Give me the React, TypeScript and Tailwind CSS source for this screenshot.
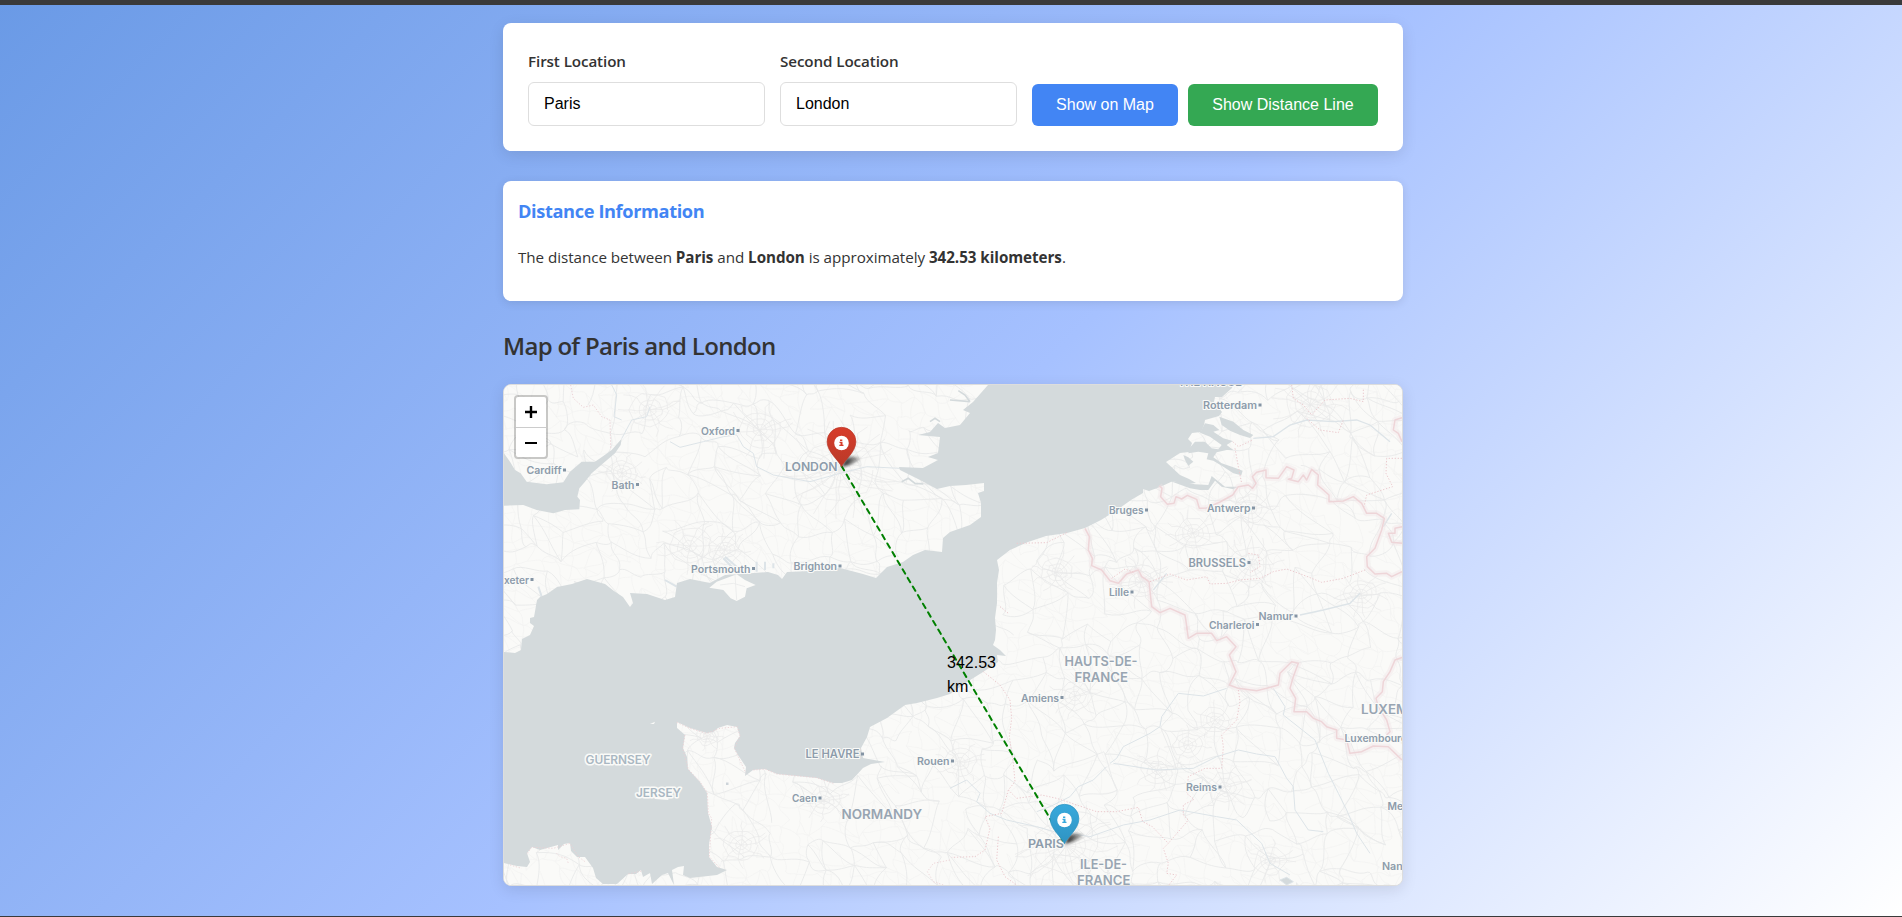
import React from "react";

const SEA =
  "M988 385L1233 385 1232 388 1222 397 1215 397 1214 402 1222 412 1219 416 1205 420 1204 425 1201 432 1192 433 1188 439 1192 443 1189 452 1180 453 1166 462 1180 475 1189 479 1196 483 1184 484 1173 481 1160 487 1149 491 1143 489 1143 493 1131 500 1117 510 1101 520 1085 528 1067 533 1046 536 1028 542 1010 550 997 560 999 570 997 583 997 603 995 618 996 630 995 640 993 645 1000 650 1006 656 997 655 998 662 983 672 967 682 950 694 937 698 917 703 905 705 887 718 870 727 867 737 861 748 863 758 885 762 871 764 863 768 852 780 842 783 833 783 817 778 797 776 777 774 765 769 753 770 745 776 746 767 738 755 734 748 735 743 740 736 737 727 727 725 718 728 713 732 707 733 690 728 677 722 677 728 685 735 683 748 687 757 688 769 700 782 707 793 708 813 712 827 709 844 709 857 717 867 727 870 717 875 690 878 683 875 684 866 678 867 672 870 674 885 668 873 662 875 652 884 650 873 643 877 641 870 636 874 628 874 617 884 603 884 596 878 593 868 585 857 577 857 571 851 570 843 564 844 558 850 558 845 540 850 532 847 527 853 530 862 527 867 517 866 504 863 504 652 515 653 521 650 522 639 530 635 534 626 530 623 530 618 534 617 537 600 540 597 547 594 557 587 572 584 587 579 605 584 614 591 623 597 630 607 633 603 630 593 647 594 665 600 675 597 677 583 690 579 710 583 725 575 740 574 768 572 778 575 782 579 787 572 810 571 840 568 863 574 876 578 887 567 903 562 913 555 925 550 942 552 943 538 950 532 970 525 981 517 981 503 978 493 984 491 984 483 966 485 950 486 937 489 920 480 900 470 899 467 923 468 938 460 928 457 938 453 940 437 918 435 930 432 938 423 945 428 960 425 970 413 963 410 973 402Z";

const BRISTOL =
  "M42 400L60 425 75 450 92 460 110 485 170 493 220 487 240 455 275 425 315 425 340 408 365 390 395 356 392 375 375 400 345 425 305 460 285 485 268 505 262 530 270 540 268 568 225 570 190 580 140 570 100 555 42 557Z";

const ESTUARIES = [
  "M765 160L790 165 808 180 790 185 820 205 848 213 830 225 850 240 830 240 800 247 790 262 815 280 850 292 878 302 874 316 850 310 820 290 790 272 770 268 775 250 745 245 715 250 718 235 735 215 765 215 785 235 805 238 815 225 780 200 750 188Z",
  "M808 140L850 155 880 180 910 195 900 204 870 195 840 182 815 165Z",
  "M660 333L700 335 735 343 775 345 785 318 800 330 825 350 865 350 850 358 815 350 795 332 775 360 750 360 720 355Z",
  "M700 255L715 262 730 275 715 287 705 270Z",
];

const SOLID_BORDERS = [
  "M628 347L636 355 632 380 652 403 672 400 678 380 695 387 712 376 740 388 748 415 770 414 810 396 848 375 865 350 895 345 908 355 918 340 907 320 920 307 948 300 948 323 985 325 1010 290 1032 300 1025 325 1015 328 1045 335 1060 315 1070 330 1085 298 1105 315 1103 345 1137 375 1137 395 1180 393 1210 380 1235 400 1250 430 1280 430 1303 445 1295 480 1275 535 1250 560 1252 590 1275 612 1310 610 1325 620 1356 605",
  "M1356 143L1335 150 1330 180 1345 190 1356 215M1356 470L1335 475 1335 490 1315 490 1325 517 1356 520",
  "M405 475L418 500 415 540 427 565 425 587 455 600 480 632 505 640 530 612 565 600 575 620 597 635 605 710 630 728 660 715 705 735 712 780",
];
const LOWER_BORDERS = [
  "M710 20L715 55 740 40 785 40 800 62 830 50 858 80 838 105 858 155 838 195 865 205 920 212 950 205 985 195 990 160 1025 125 1045 130 1030 170 1020 205 1037 235 1032 275 1070 275 1090 295 1115 305 1130 320 1160 330 1160 355 1190 360 1200 400 1235 395 1270 378 1315 380 1356 420",
  "M1356 112L1335 120 1320 155 1300 185 1297 215 1278 235 1285 260 1310 300 1320 335 1310 345",
];
const DOTTED_UPPER =
  "M1025 45L1030 85 1060 105 1085 135 1125 90 1200 85 1240 95 1240 55M1070 145L1110 180 1165 188 1180 150M848 215L865 230 908 210M855 235L865 290 875 340M1356 265L1310 265 1308 310 1328 350 1250 375 1242 410M485 625L525 597 550 607M600 635L660 612 710 630 770 620 780 642 830 640 870 630 930 625 970 605 1010 597 1060 615 1115 637 1180 625 1250 598M895 550L925 555 930 590 900 608M150 710L175 730M200 520L290 518 350 488";
const DOTTED_LOWER =
  "M100 155L150 195 180 240 185 295 178 350 190 430 195 485 175 510 200 535 275 525 320 535 380 555 440 575 500 575 565 562 578 605 607 620 655 670 640 685 655 730 650 760 680 765 655 797M865 210L870 245 860 300 815 345 820 380 815 445 765 445 715 470 710 520 732 538 700 555 700 585 715 600 655 670M175 510L155 580 105 590 120 625 105 690 75 710 5 712M145 650L140 720 165 770 200 795";

const DOTTED_FRANCE =
  "M560 367L600 385 650 400 690 385 742 380 750 408 733 445 768 520M585 405L578 445 595 508 630 545 652 578 655 640 665 655 658 770 690 805M790 510L825 507 860 522 980 533 1030 550M112 760L125 742 190 745 240 730 265 770 285 785M60 795L95 805M415 822L460 812M1380 780L1330 790 1312 815 1330 845 1360 855M200 760L210 770 230 775 235 790";

const RIVERS = [
  "M470 440L430 480 385 500 360 530 300 560 260 575M480 430L500 415 520 380 600 340 630 320 635 290 685 220 760 228 830 205",
  "M490 430L620 450 730 445 800 410 865 390 920 402 975 410 1010 475 1030 500 1035 570 1075 630 1120 635",
  "M970 205L1005 260 1000 285 1095 360 1135 460 1165 520 1190 570 1220 640 1260 700",
  "M360 640L420 650 520 615 600 600 690 570 800 590 860 600 935 670 960 730 1020 765",
  "M0 505L50 480 90 520 80 545 120 580 170 600 260 620 330 640",
];

function seeded(seed: number) {
  let s = seed;
  return () => {
    s = (s * 16807) % 2147483647;
    return s / 2147483647;
  };
}

type Pt = { x: number; y: number };

/* Builds a country-wide mesh of roads out of a jittered grid. */
function buildRoads(step: number, seed: number) {
  const rnd = seeded(seed);
  const rows = Math.ceil(540 / step) + 1;
  const cols = Math.ceil(940 / step) + 1;
  const grid: Pt[][] = [];
  for (let r = 0; r < rows; r++) {
    grid.push([]);
    for (let c = 0; c < cols; c++) {
      grid[r].push({
        x: 490 + c * step + (rnd() - 0.5) * step * 0.9,
        y: 370 + r * step + (rnd() - 0.5) * step * 0.9,
      });
    }
  }
  const link = (a: Pt, b: Pt) => {
    const j = () => (rnd() - 0.5) * step * 0.5;
    const p = (t: number) =>
      `${(a.x + (b.x - a.x) * t + j()).toFixed(1)} ${(a.y + (b.y - a.y) * t + j()).toFixed(1)}`;
    return `M${a.x.toFixed(1)} ${a.y.toFixed(1)}C${p(0.33)} ${p(0.66)} ${b.x.toFixed(1)} ${b.y.toFixed(1)}`;
  };
  let d = "";
  for (let r = 0; r < rows - 1; r++) {
    for (let c = 0; c < cols - 1; c++) {
      if (rnd() < 0.75) d += link(grid[r][c], grid[r][c + 1]);
      if (rnd() < 0.75) d += link(grid[r][c], grid[r + 1][c]);
      if (rnd() < 0.4) d += link(grid[r][c], grid[r + 1][c + 1]);
    }
  }
  return d;
}

/* Radial streets around a large town. */
function buildTown(cx: number, cy: number, radius: number, spokes: number, seed: number) {
  const rnd = seeded(seed);
  let d = "";
  for (let i = 0; i < spokes; i++) {
    let a = (i / spokes) * Math.PI * 2 + rnd() * 0.3;
    d += `M${cx} ${cy}`;
    for (let k = 1; k <= 5; k++) {
      a += (rnd() - 0.5) * 0.3;
      const q = (radius * k) / 5;
      d += `L${(cx + Math.cos(a) * q).toFixed(1)} ${(cy + Math.sin(a) * q * 0.85).toFixed(1)}`;
    }
  }
  for (const f of [0.2, 0.38, 0.6]) {
    for (let i = 0; i <= 16; i++) {
      const a = (i / 16) * Math.PI * 2;
      const q = radius * f * (0.88 + rnd() * 0.24);
      d += `${i ? "L" : "M"}${(cx + Math.cos(a) * q).toFixed(1)} ${(cy + Math.sin(a) * q * 0.85).toFixed(1)}`;
    }
  }
  return d;
}

const TOWNS: [number, number, number, number][] = [
  [840, 470, 58, 24],
  [1066, 846, 52, 22],
  [622, 473, 24, 9],
  [725, 550, 26, 9],
  [1193, 533, 28, 11],
  [1251, 565, 34, 13],
  [1141, 582, 32, 12],
  [1251, 509, 28, 10],
  [1057, 572, 26, 8],
  [1361, 594, 28, 10],
  [690, 546, 34, 8],
  [824, 800, 26, 9],
  [741, 845, 28, 8],
  [1075, 696, 28, 9],
  [1225, 787, 28, 9],
  [1157, 770, 26, 8],
  [1270, 861, 26, 8],
  [960, 762, 26, 10],
  [707, 736, 18, 7],
  [1215, 720, 24, 7],
  [1310, 405, 40, 12],
  [760, 430, 34, 9],
  [650, 410, 32, 9],
  [1188, 745, 24, 7],
];

const ROADS = buildRoads(26, 4241);
const LANES = buildRoads(14, 977);
const STREETS = TOWNS.map(([x, y, r, n], i) => buildTown(x, y, r, n, 91 + i * 37)).join("");

type Label = { t: string; x: number; y: number; w: number; size?: number; kind?: "city" | "region" | "isle"; dot?: boolean };

const LABELS: Label[] = [
  { t: "Oxford", x: 701, y: 434.5, w: 34, dot: true },
  { t: "Cardiff", x: 526.5, y: 474, w: 35, dot: true },
  { t: "Bath", x: 611.5, y: 488.5, w: 23, dot: true },
  { t: "xeter", x: 504, y: 583.5, w: 25, dot: true },
  { t: "Portsmouth", x: 691, y: 572.5, w: 59.5, dot: true },
  { t: "Brighton", x: 793.5, y: 570, w: 43.5, dot: true },
  { t: "LONDON", x: 785, y: 471, w: 52.5, size: 12 },
  { t: "Rotterdam", x: 1203, y: 409, w: 54, dot: true },
  { t: "Bruges", x: 1109, y: 514, w: 34.5, dot: true },
  { t: "Antwerp", x: 1207, y: 512, w: 43.5, dot: true },
  { t: "BRUSSELS", x: 1188.5, y: 566.5, w: 57.5, size: 11.5, dot: true },
  { t: "Lille", x: 1109, y: 596, w: 20, dot: true },
  { t: "Namur", x: 1258.5, y: 620, w: 34.5, dot: true },
  { t: "Charleroi", x: 1209, y: 628.5, w: 45.5, dot: true },
  { t: "Amiens", x: 1021, y: 701.5, w: 38, dot: true },
  { t: "Reims", x: 1186, y: 791, w: 31, dot: true },
  { t: "Rouen", x: 917, y: 765, w: 32.5, dot: true },
  { t: "Caen", x: 792, y: 802, w: 25, dot: true },
  { t: "LE HAVRE", x: 805.5, y: 758, w: 54, size: 11.5, dot: true },
  { t: "PARIS", x: 1028, y: 848, w: 36, size: 12 },
  { t: "Luxembourg", x: 1344.5, y: 742, w: 63 },
  { t: "Metz", x: 1387.5, y: 810, w: 25 },
  { t: "Nancy", x: 1382, y: 869.5, w: 33 },
  { t: "THE HAGUE", x: 1178, y: 386, w: 64, size: 11.5 },
  { t: "HAUTS-DE-", x: 1064.5, y: 665.5, w: 73, size: 13, kind: "region" },
  { t: "FRANCE", x: 1074.5, y: 681.5, w: 53.5, size: 13, kind: "region" },
  { t: "ILE-DE-", x: 1080, y: 868.5, w: 47, size: 13, kind: "region" },
  { t: "FRANCE", x: 1077, y: 884.5, w: 53.5, size: 13, kind: "region" },
  { t: "NORMANDY", x: 841.5, y: 819, w: 80.5, size: 13, kind: "region" },
  { t: "LUXEMBOURG", x: 1361, y: 714, w: 95, size: 12.5, kind: "region" },
  { t: "GUERNSEY", x: 585.5, y: 764, w: 65, size: 11.5, kind: "isle" },
  { t: "JERSEY", x: 636, y: 797, w: 45, size: 11.5, kind: "isle" },
];

const INK = { city: "#8d9cab", region: "#98a5b2", isle: "#a9b7c2" };

function MapLabel({ t, x, y, w, size = 10.2, kind = "city", dot }: Label) {
  return (
    <g>
      <text
        x={x}
        y={y}
        textLength={w}
        lengthAdjust="spacingAndGlyphs"
        fontSize={size}
        fill={INK[kind]}
        stroke="#fafaf8"
        strokeWidth={kind === "isle" ? 3 : 2.2}
        strokeLinejoin="round"
        paintOrder="stroke"
        className="font-['Inter',sans-serif] font-semibold"
      >
        {t}
      </text>
      {dot && <rect x={x + w + 1.5} y={y - 5.5} width="3" height="3" fill="#8494a4" />}
    </g>
  );
}

function Pin({ x, y, from, to, id }: { x: number; y: number; from: string; to: string; id: string }) {
  return (
    <g transform={`translate(${x} ${y})`}>
      <defs>
        <linearGradient id={id} x1="0" y1="0" x2="0" y2="1">
          <stop offset="0" stopColor={from} />
          <stop offset="1" stopColor={to} />
        </linearGradient>
      </defs>
      <path d="M0 0L5 -9Q11 -11 18 -9.5Q20 -8 14 -5Q7 -1 0 0Z" fill="url(#shade)" filter="url(#soft)" />
      <path
        d="M0 -0.3C-2 -6 -14.4 -15 -14.4 -25.3A14.4 14.4 0 0 1 14.4 -25.3C14.4 -15 2 -6 0 -0.3Z"
        fill={`url(#${id})`}
        stroke={to}
        strokeWidth="0.7"
      />
      <circle cx="0" cy="-24" r="7.3" fill="#fff" />
      <path d="M-1.5 -27.5H0.8V-26H-1.5ZM-2 -25.3H1V-22.2H2V-21H-2.2V-22.2H-1V-24.1H-2Z" fill={from} />
    </g>
  );
}

function ChannelMap() {
  return (
    <svg viewBox="504 385 898 500" className="block h-full w-full">
      <defs>
        <filter id="soft" x="-40%" y="-80%" width="180%" height="260%">
          <feGaussianBlur stdDeviation="1.4" />
        </filter>
        <linearGradient id="shade">
          <stop offset="0.2" stopColor="#000" stopOpacity="0.8" />
          <stop offset="1" stopColor="#000" stopOpacity="0.2" />
        </linearGradient>
      </defs>
      <rect x="504" y="385" width="898" height="500" fill="#fafaf8" />
      <path d={LANES} fill="none" stroke="#f4f4f3" strokeWidth="0.8" />
      <path d={ROADS} fill="none" stroke="#e9eaea" strokeWidth="0.9" />
      <path d={STREETS} fill="none" stroke="#e9eaea" strokeWidth="0.7" />
      <g transform="translate(950 620) scale(.33333)" fill="none" stroke="#dde4e8" strokeWidth="3">
        {RIVERS.map((d) => (
          <path key={d} d={d} />
        ))}
        <path d="M990 780L1010 772 1030 785 1010 795Z" fill="#d4dadc" />
      </g>
      <g transform="translate(490 320) scale(.33333)" fill="none" stroke="#dde4e8" strokeWidth="3">
        <path d="M395 356L425 300 470 290 480 260M365 195L380 225 372 290 395 300M540 365L570 382 640 365 700 350 740 345 760 380 790 400 800 440 850 465 960 485 1050 460 1130 440 1230 445" />
        <path d="M705 710L740 740 730 745 700 715M800 725V755M825 725V750M850 730V745M525 780L560 800M145 800L155 830" strokeWidth="6" />
        <path d="M242 195L250 235 280 262 310 255 335 290 360 300 362 385" stroke="#ecd3d7" strokeDasharray="4 5" />
      </g>

      <path d={SEA} fill="#d4dadc" />
      <g transform="translate(490 320) scale(.33333)">
        <path d={BRISTOL} fill="#d4dadc" />
        <path d="M658 803L680 785 740 763 765 780 797 795 770 805 765 830 740 843 722 835 700 810Z" fill="#fafaf8" />
        <path d="M690 795L730 790 765 800M735 765L740 840" fill="none" stroke="#e9eaea" strokeWidth="2.5" />
        <path d="M1320 305L1335 295 1350 305M1235 485L1255 475 1275 490 1300 492" fill="none" stroke="#d4dadc" strokeWidth="5" />
      </g>
      <g transform="translate(950 370) scale(.33333)" fill="#d4dadc">
        {ESTUARIES.map((d) => (
          <path key={d} d={d} />
        ))}
        <path d="M25 62L45 75 60 95M0 90L60 95M45 120L65 105" fill="none" stroke="#d4dadc" strokeWidth="5" />
        <path d="M910 205L970 200 1020 165 1070 150 1150 155 1220 150 1260 165 1320 215M1325 430L1300 470M610 660L650 610M1230 670L1200 700 1120 720 1050 735" fill="none" stroke="#dde4e8" strokeWidth="4" />
      </g>
      <g transform="translate(490 600) scale(.33333)" fill="#fafaf8">
        <path d="M480 372L495 365 492 372ZM400 462L385 478 400 485ZM490 590L535 590 535 600 495 597Z" />
        <path d={DOTTED_FRANCE} fill="none" stroke="#ecd0d4" strokeWidth="2.5" strokeDasharray="4 5" />
      </g>

      <g fill="none" strokeLinejoin="round">
        <g transform="translate(950 370) scale(.33333)">
          {SOLID_BORDERS.map((d) => (
            <g key={d}>
              <path d={d} stroke="#f0e4e5" strokeOpacity="0.4" strokeWidth="18" />
              <path d={d} stroke="#eed5d8" strokeWidth="4.5" />
            </g>
          ))}
          <path d={DOTTED_UPPER} stroke="#ebcace" strokeWidth="3" strokeDasharray="4 5" />
        </g>
        <g transform="translate(950 620) scale(.33333)">
          {LOWER_BORDERS.map((d) => (
            <g key={d}>
              <path d={d} stroke="#f0e4e5" strokeOpacity="0.4" strokeWidth="18" />
              <path d={d} stroke="#eed5d8" strokeWidth="4.5" />
            </g>
          ))}
          <path d={DOTTED_LOWER} stroke="#ebcace" strokeWidth="3" strokeDasharray="4 5" />
        </g>
      </g>

      {LABELS.map((l) => (
        <MapLabel key={`${l.t}-${l.x}`} {...l} />
      ))}
      <rect x="726" y="782.5" width="2.5" height="2.5" fill="#cdd4d9" />

      <path d="M841.5 466L1064.5 843" stroke="green" strokeWidth="2" strokeDasharray="5 5" strokeLinecap="round" fill="none" />
      <Pin id="pin-red" x={841.5} y={467} from="#d73c2a" to="#b93a29" />
      <Pin id="pin-blue" x={1064.5} y={844} from="#38a9dc" to="#2f93c2" />
    </svg>
  );
}

function Field({ label, value }: { label: string; value: string }) {
  return (
    <label className="flex w-[237px] flex-col">
      <span className="mb-[9px] text-[15.2px] leading-6 font-semibold tracking-[-0.1px] text-[#333]">{label}</span>
      <input
        defaultValue={value}
        className="h-11 w-full rounded-[6px] border border-[#dedede] bg-white px-[15px] font-['Liberation_Sans',sans-serif] text-base text-black outline-none"
      />
    </label>
  );
}

export default function App() {
  return (
    <div className="flex h-[917px] flex-col overflow-hidden border-t-[5px] border-b border-[#3a3a3a] bg-[linear-gradient(135deg,#6a9ae6_0%,#a6c1ff_50%,#ffffff_100%)] bg-origin-border pl-1 font-['Open_Sans','Noto_Sans',sans-serif] text-[#333]">
      <main className="mx-auto flex w-[900px] flex-col pt-[18px]">
        <section className="flex h-32 items-end rounded-lg bg-white px-[25px] pb-[25px] shadow-[0_4px_15px_rgba(0,0,0,0.1)]">
          <div className="flex gap-[15px]">
            <Field label="First Location" value="Paris" />
            <Field label="Second Location" value="London" />
          </div>
          <div className="ml-[15px] flex gap-[10px] font-['Liberation_Sans',sans-serif] text-base text-white">
            <button className="h-[42px] w-[146px] rounded-[6px] bg-[#4285f4]">Show on Map</button>
            <button className="h-[42px] w-[190px] rounded-[6px] bg-[#34a853]">Show Distance Line</button>
          </div>
        </section>

        <section className="mt-[30px] h-[120px] rounded-lg bg-white px-[15px] pt-[15px] shadow-[0_2px_10px_rgba(0,0,0,0.1)]">
          <h3 className="text-[18.2px] leading-[31px] font-bold tracking-[-0.37px] text-[#4285f4]">Distance Information</h3>
          <p className="mt-[18px] text-[15.2px] leading-6 tracking-[-0.045px]">
            The distance between <strong>Paris</strong> and <strong>London</strong> is approximately{" "}
            <strong>342.53 kilometers</strong>.
          </p>
        </section>

        <h2 className="mt-[25px] text-[24px] leading-10 font-semibold tracking-[-0.7px]">Map of Paris and London</h2>

        <section className="relative mt-[18px] h-[502px] overflow-hidden rounded-lg border border-[#ddd] bg-[#fafaf8] shadow-[0_4px_15px_rgba(0,0,0,0.1)]">
          <ChannelMap />
          <div className="absolute top-[10px] left-[10px] flex h-16 w-[34px] flex-col overflow-hidden rounded border-2 border-black/20 bg-white bg-clip-padding">
            <button className="flex h-[31px] items-center justify-center border-b border-[#ccc]" aria-label="Zoom in">
              <svg viewBox="0 0 12 12" className="h-3 w-3"><path d="M0 6H12M6 0V12" stroke="#000" strokeWidth="2.4" /></svg>
            </button>
            <button className="flex h-[29px] items-center justify-center" aria-label="Zoom out">
              <svg viewBox="0 0 12 12" className="h-3 w-3"><path d="M0 6H12" stroke="#000" strokeWidth="2.2" /></svg>
            </button>
          </div>
          <div className="absolute top-[266px] left-[443px] w-[50px] font-['Liberation_Sans',sans-serif] text-base leading-6 text-black">
            342.53 km
          </div>
        </section>
      </main>
    </div>
  );
}
